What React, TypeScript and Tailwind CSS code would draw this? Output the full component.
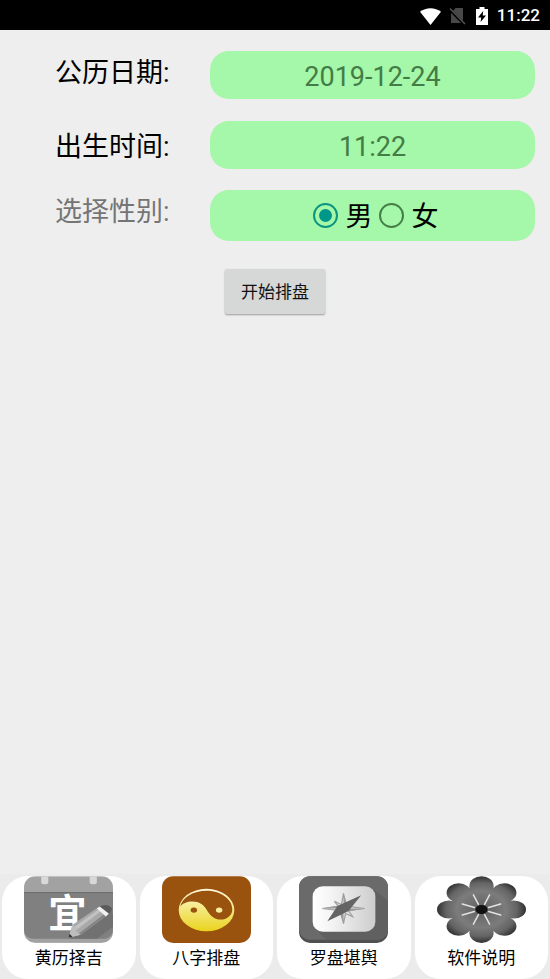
import { useState } from "react";
import type { ReactNode } from "react";

const labelClass = "w-[155px] text-[27px] leading-11";
const fieldClass =
  "h-full min-w-0 flex-1 rounded-[19px] bg-[#a5f7a9] pt-[3px] text-center text-[27px] text-[#437c45] outline-none";

function StatusBar() {
  return (
    <header className="flex h-[30px] items-center justify-end bg-black pt-[2px] pr-[10px] text-[17px] font-medium text-white">
      <svg className="h-[17px] w-[21px]" viewBox="0 0 21 17" fill="#fff">
        <path d="M0 3.8C6 -1 15 -1 21 3.8L10.5 17Z" />
      </svg>
      <svg className="ml-2 h-[18px] w-[17px]" viewBox="0 0 17 18">
        <path d="M2 6 6.5 1H14V16H2Z" fill="#484848" />
        <path d="M0 1.5 15.5 17.5" stroke="#000" strokeWidth="3" />
        <path d="M1 1.5 16 17" stroke="#555" strokeWidth="1.4" />
      </svg>
      <svg className="ml-[10px] h-[18px] w-[12px]" viewBox="0 0 12 18">
        <path d="M0 2H3.5V0H8.5V2H12V18H0Z" fill="#fff" />
        <path d="M7.2 4 2 10.6H5.2L4.6 15 10 8.4H6.7Z" fill="#000" />
      </svg>
      <span className="ml-[9px]">11:22</span>
    </header>
  );
}

function CalendarIcon() {
  return (
    <svg className="h-[67px] w-[89px]" viewBox="0 0 88 66">
      <defs>
        <clipPath id="calendar-shape">
          <rect width="88" height="66" rx="11" />
        </clipPath>
      </defs>
      <g clipPath="url(#calendar-shape)">
        <rect width="88" height="66" fill="#a2a2a2" />
        <path d="M0 17H88V52Q88 62 77 62H11Q0 62 0 52Z" fill="#808080" />
        <path d="M0 16.5H88" stroke="#5c5c5c" />
        <path d="M17 0H24V6Q24 8 20.5 8T17 6Z" fill="#d8d8d8" />
        <path d="M65 0H72V6Q72 8 68.5 8T65 6Z" fill="#d8d8d8" />
        <path d="M45 61 86 34 88 38V50L72 62H46Z" fill="#717171" />
        <text
          x="43"
          y="50"
          textAnchor="middle"
          className="fill-white font-['Noto_Sans_CJK_SC'] text-[38px] font-bold"
        >
          宜
        </text>
        <path d="M44 61 48 48 73 31 82 39 56 58Z" fill="#a9a9a9" />
        <path d="M50 50 75 32 77 34 52 53Z" fill="#c2c2c2" />
        <path d="M54 57 80 37 82 39 56 58Z" fill="#858585" />
        <path d="M44 61 48 48 51 51 52 55 56 58Z" fill="#bdbdbd" />
        <path d="M44 61 45 57 48 60Z" fill="#333" />
        <path d="M72 32 75 30 84 37 81 40Z" fill="#f2f2f2" />
        <path d="M75 30 77 29Q84 27 87 32Q87 35 84 37Z" fill="#5b5b5b" />
      </g>
    </svg>
  );
}

function YinYangIcon() {
  return (
    <svg className="h-[67px] w-[89px]" viewBox="0 0 88 66">
      <defs>
        <linearGradient id="gold" x1="0" y1="0" x2="0" y2="1">
          <stop offset="0" stopColor="#fffbe0" />
          <stop offset="0.5" stopColor="#f4e77c" />
          <stop offset="1" stopColor="#e9d31c" />
        </linearGradient>
      </defs>
      <rect width="88" height="66" rx="11" fill="#99530f" />
      <ellipse cx="44" cy="33.5" rx="27.5" ry="21" fill="url(#gold)" />
      <path
        d="M18 30C20 21 31 14.5 44 14.5S69.500 22 69.500 33C69.500 39 64 43 58 43C51 43 47 38 44 33C41 28 37 25 30 25C25 25 20 27 18 30Z"
        fill="#99530f"
      />
      <ellipse cx="31.5" cy="33.5" rx="3.200" ry="2.600" fill="#99530f" />
      <ellipse cx="56.5" cy="33.5" rx="3.200" ry="2.600" fill="#f6eba0" />
    </svg>
  );
}

function CompassIcon() {
  return (
    <svg className="h-[67px] w-[89px]" viewBox="0 0 88 66">
      <defs>
        <linearGradient id="dial" x1="0" y1="0" x2="1" y2="0">
          <stop offset="0" stopColor="#fff" />
          <stop offset="0.3" stopColor="#f4f4f4" />
          <stop offset="1" stopColor="#cdcdcd" />
        </linearGradient>
        <clipPath id="compass-shape">
          <rect width="88" height="63" rx="11" />
        </clipPath>
      </defs>
      <rect width="88" height="66" rx="11" fill="#505050" />
      <g clipPath="url(#compass-shape)">
        <rect width="88" height="64" fill="#6a6a6a" />
        <path d="M73 13 88 24V66H30L16 52Z" fill="#606060" />
      </g>
      <rect x="13.5" y="10" width="62" height="45" rx="10" fill="url(#dial)" />
      <path
        d="M35 25 42 28 44 17 46 28 53 25 49 30 65 32 49 34 53 40 46 37 44 47 42 37 35 40 39 34 23 32 39 30Z"
        fill="#dedede"
        stroke="#a0a0a0"
        strokeWidth="1.2"
      />
      <path d="M44 17V32L48 29ZM65 32H44L49 35ZM44 47V32L40 36ZM23 32H44L39 29Z" fill="#9b9b9b" />
      <path d="M28 44.5 38 29.5 61.5 19 49 34.500Z" fill="#646464" />
    </svg>
  );
}

function FlowerIcon() {
  return (
    <svg className="h-[67px] w-[89px]" viewBox="0 0 88 66">
      <defs>
        <radialGradient
          id="petals"
          gradientUnits="userSpaceOnUse"
          cx="44"
          cy="44"
          r="44"
          gradientTransform="scale(1 0.75)"
        >
          <stop offset="0" stopColor="#606060" />
          <stop offset="0.55" stopColor="#7c7c7c" />
          <stop offset="0.8" stopColor="#646464" />
          <stop offset="1" stopColor="#303030" />
        </radialGradient>
      </defs>
      <g fill="url(#petals)">
        <ellipse cx="44" cy="10" rx="12" ry="10" />
        <ellipse cx="66.5" cy="16.5" rx="12" ry="9.5" />
        <ellipse cx="76" cy="33" rx="12" ry="9" />
        <ellipse cx="66.5" cy="49.5" rx="12" ry="9.5" />
        <ellipse cx="44" cy="56" rx="12" ry="10" />
        <ellipse cx="21.5" cy="49.5" rx="12" ry="9.5" />
        <ellipse cx="12" cy="33" rx="12" ry="9" />
        <ellipse cx="21.5" cy="16.5" rx="12" ry="9.5" />
        <ellipse cx="44" cy="33" rx="31" ry="23" />
      </g>
      <g stroke="#e2e2e2" strokeWidth="1.500" strokeLinecap="round">
        <path d="M37 31 25 27.500" />
        <path d="M41 28 36 18.500" />
        <path d="M47 28 52 18.500" />
        <path d="M51 31 63 27.500" />
        <path d="M51 35 63 38.500" />
        <path d="M47 38 52 47.500" />
        <path d="M41 38 36 47.500" />
        <path d="M37 35 25 38.500" />
      </g>
      <ellipse cx="44" cy="33" rx="6" ry="4.500" fill="#111" />
    </svg>
  );
}

function GenderOption({
  value,
  checked,
  onSelect,
}: {
  value: string;
  checked: boolean;
  onSelect: (value: string) => void;
}) {
  return (
    <label className="flex items-center gap-2 text-[27px] text-black">
      <input
        type="radio"
        name="gender"
        value={value}
        checked={checked}
        onChange={() => onSelect(value)}
        className="size-[25px] appearance-none rounded-full border-2 border-[#457f48] bg-clip-content p-1 checked:border-[#0b9480] checked:bg-[#009688]"
      />
      <span className="pt-1">{value}</span>
    </label>
  );
}

function NavItem({ label, children }: { label: string; children: ReactNode }) {
  return (
    <a
      href="#"
      className="flex flex-1 flex-col items-center rounded-[26px] bg-white pb-[6px] text-[17px] leading-[30px] text-black"
    >
      {children}
      {label}
    </a>
  );
}

export default function App() {
  const [date, setDate] = useState("2019-12-24");
  const [time, setTime] = useState("11:22");
  const [gender, setGender] = useState("男");

  return (
    <div className="flex min-h-screen flex-col bg-[#eee] font-[Roboto,'Noto_Sans_CJK_SC',sans-serif]">
      <StatusBar />
      <main className="flex flex-1 flex-col pt-[21px]">
        <form className="flex flex-col" onSubmit={(e) => e.preventDefault()}>
          <div className="flex h-12 items-start pr-[15px] pl-[55px]">
            <label htmlFor="date" className={`${labelClass} text-black`}>
              公历日期:
            </label>
            <input
              id="date"
              type="text"
              value={date}
              onChange={(e) => setDate(e.target.value)}
              className={fieldClass}
            />
          </div>
          <div className="mt-[22px] flex h-12 items-end pr-[15px] pl-[55px]">
            <label htmlFor="time" className={`${labelClass} text-black`}>
              出生时间:
            </label>
            <input
              id="time"
              type="text"
              value={time}
              onChange={(e) => setTime(e.target.value)}
              className={fieldClass}
            />
          </div>
          <div
            role="radiogroup"
            aria-labelledby="gender-label"
            className="mt-[21px] flex h-[51px] items-start pr-[15px] pl-[55px]"
          >
            <span id="gender-label" className={`${labelClass} text-[#757575]`}>
              选择性别:
            </span>
            <div className="flex h-full flex-1 items-center justify-center gap-[6px] rounded-[19px] bg-[#a5f7a9] pl-[6px]">
              {["男", "女"].map((value) => (
                <GenderOption
                  key={value}
                  value={value}
                  checked={gender === value}
                  onSelect={setGender}
                />
              ))}
            </div>
          </div>
          <button
            type="submit"
            className="mt-7 h-[45px] w-[100px] self-center rounded-[2px] bg-[#d6d7d7] pt-[2px] text-[17px] text-[#111] shadow-[0_1px_2px_rgba(0,0,0,0.35)]"
          >
            开始排盘
          </button>
        </form>
      </main>
      <nav className="flex gap-1 bg-[#ebebeb] px-[2px] pt-[2px]">
        <NavItem label="黄历择吉">
          <CalendarIcon />
        </NavItem>
        <NavItem label="八字排盘">
          <YinYangIcon />
        </NavItem>
        <NavItem label="罗盘堪舆">
          <CompassIcon />
        </NavItem>
        <NavItem label="软件说明">
          <FlowerIcon />
        </NavItem>
      </nav>
    </div>
  );
}
